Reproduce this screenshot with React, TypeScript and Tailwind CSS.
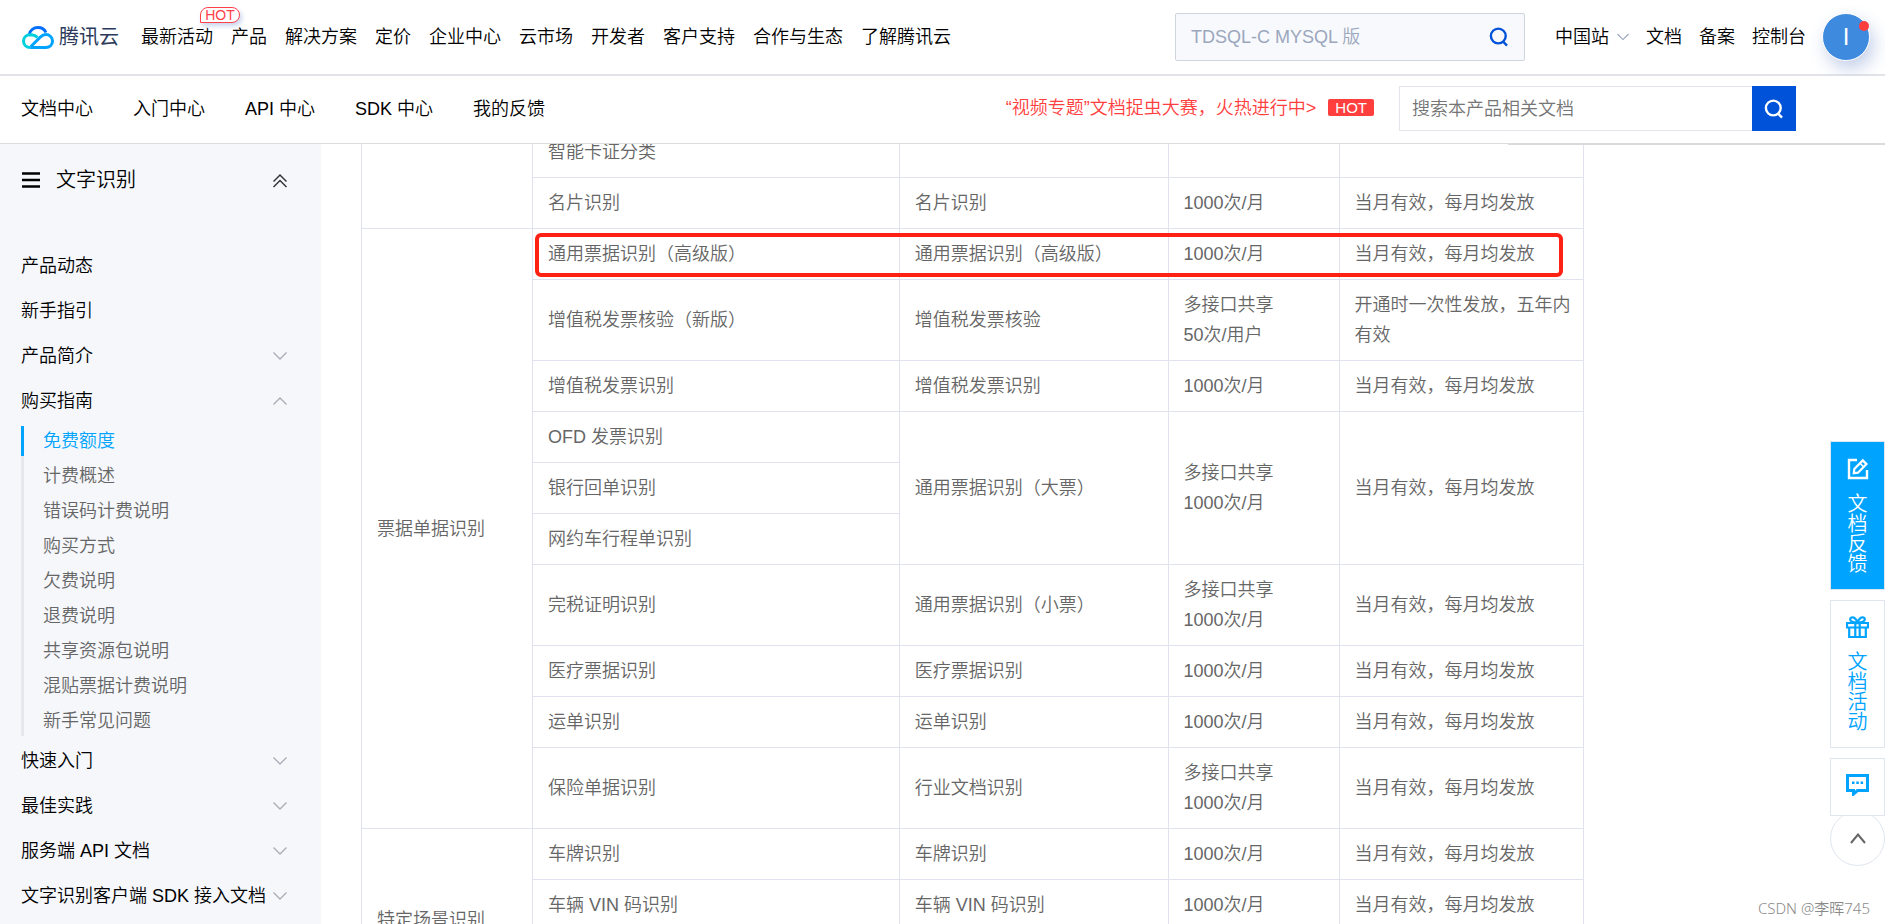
import { useState } from 'react';

const topNav = ['最新活动', '产品', '解决方案', '定价', '企业中心', '云市场', '开发者', '客户支持', '合作与生态', '了解腾讯云'];
const docNav = ['文档中心', '入门中心', 'API 中心', 'SDK 中心', '我的反馈'];

type MenuItem = { label: string; expandable?: boolean; children?: string[] };

const menu: MenuItem[] = [
  { label: '产品动态' },
  { label: '新手指引' },
  { label: '产品简介', expandable: true },
  {
    label: '购买指南',
    expandable: true,
    children: [
      '免费额度',
      '计费概述',
      '错误码计费说明',
      '购买方式',
      '欠费说明',
      '退费说明',
      '共享资源包说明',
      '混贴票据计费说明',
      '新手常见问题',
    ],
  },
  { label: '快速入门', expandable: true },
  { label: '最佳实践', expandable: true },
  { label: '服务端 API 文档', expandable: true },
  { label: '文字识别客户端 SDK 接入文档', expandable: true },
];

type Cell = { text: string; rowSpan?: number };

const monthly = '当月有效，每月均发放';
const shared = '多接口共享\n1000次/月';

const row = (...texts: string[]): Cell[] => texts.map((text) => ({ text }));

const rows: Cell[][] = [
  [{ text: '', rowSpan: 2 }, ...row('智能卡证分类', '', '', '')],
  row('名片识别', '名片识别', '1000次/月', monthly),
  [{ text: '票据单据识别', rowSpan: 10 }, ...row('通用票据识别（高级版）', '通用票据识别（高级版）', '1000次/月', monthly)],
  row('增值税发票核验（新版）', '增值税发票核验', '多接口共享\n50次/用户', '开通时一次性发放，五年内有效'),
  row('增值税发票识别', '增值税发票识别', '1000次/月', monthly),
  [
    { text: 'OFD 发票识别' },
    { text: '通用票据识别（大票）', rowSpan: 3 },
    { text: shared, rowSpan: 3 },
    { text: monthly, rowSpan: 3 },
  ],
  row('银行回单识别'),
  row('网约车行程单识别'),
  row('完税证明识别', '通用票据识别（小票）', shared, monthly),
  row('医疗票据识别', '医疗票据识别', '1000次/月', monthly),
  row('运单识别', '运单识别', '1000次/月', monthly),
  row('保险单据识别', '行业文档识别', shared, monthly),
  [{ text: '特定场景识别', rowSpan: 3 }, ...row('车牌识别', '车牌识别', '1000次/月', monthly)],
  row('车辆 VIN 码识别', '车辆 VIN 码识别', '1000次/月', monthly),
  row('', '', shared, monthly),
];

const Chevron = ({ up = false, className = '' }: { up?: boolean; className?: string }) => (
  <svg className={className} width="14" height="8" viewBox="0 0 14 8" fill="none" stroke="currentColor" strokeWidth="1.3">
    <path d={up ? 'M.5 7.5 7 1l6.5 6.5' : 'M.5.5 7 7 13.5.5'} />
  </svg>
);

const SearchIcon = () => (
  <svg width="20" height="20" viewBox="0 0 20 20" fill="none" stroke="currentColor" strokeWidth="2.4">
    <circle cx="9.3" cy="9" r="7.4" />
    <path d="m13.5 14 4.5 4.6" />
  </svg>
);

const Logo = () => (
  <a href="#" className="flex items-center gap-[5px]">
    <svg width="32" height="23" viewBox="0 0 32 23" fill="none" strokeWidth="3">
      <path d="M7.4 8.2C8.2 4.3 11.7 1.5 15.9 1.5c3.7 0 6.7 2 8 5" stroke="#006eff" />
      <path d="M15.5 11.5C13.5 9.6 11 8.8 8.3 8.8 4.4 8.9 1.5 11.6 1.5 15.2c0 3.6 2.9 6.3 6.7 6.3" stroke="#00d0dc" />
      <path d="M8.2 21.5h15.7c3.7 0 6.6-2.7 6.6-6.4s-2.9-6.5-6.6-6.5c-2 0-3.8.8-5.2 2.2L8.9 20.5" stroke="#00a3ff" />
    </svg>
    <span className="text-xl font-normal text-[#2b3a5a]">腾讯云</span>
  </a>
);

const Header = () => (
  <header className="flex h-[76px] items-center border-b-2 border-[#e1e3e8] pr-[15px] pl-[22px] whitespace-nowrap text-black">
    <Logo />
    <nav className="ml-[22px] flex gap-[18px]">
      {topNav.map((item) => (
        <a key={item} href="#" className="relative">
          {item}
          {item === '最新活动' && (
            <span className="absolute -top-4 left-[59px] h-4 w-10 rounded-lg rounded-bl-none border border-[#ff4048] bg-white text-center text-sm leading-[14px] text-[#ff4048] shadow-[2px_3px_5px_#c9d4ee]">
              HOT
            </span>
          )}
        </a>
      ))}
    </nav>

    <div className="ml-auto flex h-12 w-[350px] items-center rounded-xs border border-[#cfd5de] bg-[#f8f9fc] px-[15px]">
      <input aria-label="搜索" placeholder="TDSQL-C MYSQL 版" className="min-w-0 flex-1 outline-none placeholder:text-[#9ba7bd]" />
      <button type="button" aria-label="搜索" className="text-[#0052d9]">
        <SearchIcon />
      </button>
    </div>

    <div className="ml-[30px] flex items-center gap-[17px]">
      <a href="#" className="flex items-center gap-2">
        中国站
        <Chevron className="w-3 text-[#97a3b7]" />
      </a>
      <a href="#">文档</a>
      <a href="#">备案</a>
      <a href="#">控制台</a>
    </div>
    <button
      type="button"
      className="relative ml-4 size-12 rounded-full border border-white bg-[#3e8ade] text-2xl leading-none text-white shadow-[4px_8px_18px_#c3cfe8]"
    >
      I
      <span className="absolute top-[7px] right-0 size-[10px] rounded-full bg-[#ff3e3e]" />
    </button>
  </header>
);

const DocBar = () => (
  <div className="relative z-10 flex h-[68px] items-center border-b border-[#dcdcdc] bg-white pr-[89px] pb-[2px] pl-[21px] whitespace-nowrap text-black">
    <nav className="flex gap-10">
      {docNav.map((item) => (
        <a key={item} href="#">
          {item}
        </a>
      ))}
    </nav>
    <a href="#" className="ml-auto flex items-center gap-3 pb-[2px] text-[#ff3e3e]">
      “视频专题”文档捉虫大赛，火热进行中&gt;
      <span className="rounded-xs bg-[#ff3e3e] px-[7px] text-[15px] leading-[17px] text-white">HOT</span>
    </a>
    <div className="ml-[25px] flex h-[45px] w-[397px]">
      <input
        aria-label="搜索本产品相关文档"
        placeholder="搜索本产品相关文档"
        className="min-w-0 flex-1 border border-r-0 border-[#e3e5ea] px-3 outline-none placeholder:text-[#757575]"
      />
      <button type="button" aria-label="搜索文档" className="flex w-11 items-center justify-center bg-[#0052d9] text-white">
        <SearchIcon />
      </button>
    </div>
    {/* 右侧目录的上边线 */}
    <div className="absolute right-0 -bottom-[2px] h-[2px] w-1/5 bg-[#dadada]" />
  </div>
);

const Sidebar = () => {
  const [active, setActive] = useState('免费额度');

  return (
    <aside className="w-[321px] shrink-0 bg-[#f5f7fb] text-black">
      <div className="flex h-[72px] items-center pr-[34px] pl-[22px]">
        <svg width="18" height="16" viewBox="0 0 18 16" stroke="currentColor" strokeWidth="2.4">
          <path d="M0 1.5h18M0 8h18M0 14.5h18" />
        </svg>
        <h2 className="ml-4 text-xl">文字识别</h2>
        <svg className="ml-auto text-[#333]" width="14" height="16" viewBox="0 0 14 16" fill="none" stroke="currentColor" strokeWidth="1.5">
          <path d="M.5 9.5 7 3l6.5 6.5M.5 15 7 8.5l6.5 6.5" />
        </svg>
      </div>

      <ul className="mt-[27px] pr-[34px] pl-[21px] whitespace-nowrap">
        {menu.map((item) => (
          <li key={item.label}>
            <a href="#" className="flex h-[45px] items-center justify-between">
              {item.label}
              {item.expandable && <Chevron up={!!item.children} className="shrink-0 text-[#a8acb5]" />}
            </a>
            {item.children && (
              <ul className="mt-[3px] mb-[2px] flex flex-col gap-[5px] bg-[linear-gradient(#e6e8ed,#e6e8ed)] bg-[length:3px_100%] bg-no-repeat">
                {item.children.map((child) => (
                  <li key={child}>
                    <a
                      href="#"
                      onClick={() => setActive(child)}
                      className={`flex h-[30px] items-center border-l-[3px] pl-[19px] ${
                        child === active ? 'border-[#00a4ff] text-[#00a4ff]' : 'border-[#e6e8ed] text-[#666]'
                      }`}
                    >
                      {child}
                    </a>
                  </li>
                ))}
              </ul>
            )}
          </li>
        ))}
      </ul>
    </aside>
  );
};

const QuotaTable = () => (
  <div className="relative -mt-[18px]">
    <table className="w-full table-fixed border-collapse text-[#666]">
      <colgroup>
        <col className="w-[14%]" />
        <col className="w-[30%]" />
        <col className="w-[22%]" />
        <col className="w-[14%]" />
        <col className="w-[20%]" />
      </colgroup>
      <tbody>
        {rows.map((cells, i) => (
          <tr key={i} className="h-[51px]">
            {cells.map((cell, j) => (
              <td
                key={j}
                rowSpan={cell.rowSpan}
                className="border border-[#e0e3ef] py-[10px] pr-2 pl-[15px] align-middle leading-[30px] whitespace-pre-line"
              >
                {cell.text}
              </td>
            ))}
          </tr>
        ))}
      </tbody>
    </table>
    {/* 高亮「通用票据识别（高级版）」一行 */}
    <div className="pointer-events-none absolute top-[107px] right-[21px] left-[174px] h-11 rounded-md border-4 border-[#ff2214]" />
  </div>
);

const FloatBar = () => (
  <div className="absolute right-0 bottom-[58px] flex w-[55px] flex-col text-xl leading-5">
    <button type="button" className="flex h-[149px] flex-col items-center gap-[14px] border border-[#e0e6ef] bg-[#00a4ff] pt-4 text-white">
      <svg width="22" height="22" viewBox="0 0 22 22" fill="none" stroke="currentColor" strokeWidth="2.4">
        <path d="M10 2H2v18h18v-8" />
        <path d="m6.8 15.2.5-4.3 8.5-8.5 3.7 3.7-8.5 8.6z" strokeWidth="2.2" />
        <path d="m13 5.2 3.6 3.6" strokeWidth="1.6" />
      </svg>
      <span className="w-5">文档反馈</span>
    </button>
    <button type="button" className="mt-[10px] flex h-[148px] flex-col items-center gap-[14px] border border-[#e0e6ef] bg-white pt-[15px] text-[#00a4ff]">
      <svg width="23" height="22" viewBox="0 0 23 22" fill="none" stroke="currentColor" strokeWidth="2.2">
        <path d="M1 7h21v4.5H1zM3.2 11.5V21h16.6v-9.500M9.3 7v14M13.7 7v14" />
        <path d="M11.5 7C8.5 6.5 4.5 6 4.2 3.6 4 1.6 6.5.8 8.2 1.8 10 2.9 11 5 11.5 7zM11.5 7c3-.5 7-1 7.3-3.4.2-2-2.3-2.8-4-1.8-1.8 1.1-2.8 3.2-3.3 5.2z" />
      </svg>
      <span className="w-5">文档活动</span>
    </button>
    <button type="button" aria-label="在线咨询" className="z-10 mt-[10px] flex h-[58px] items-center justify-center border border-[#e0e6ef] bg-white pb-1 text-[#00a4ff]">
      <svg width="23" height="22" viewBox="0 0 23 22" fill="none">
        <path d="M1.5 1.5h20v15H11.5l-4 3.5v-3.5h-6z" stroke="currentColor" strokeWidth="3" />
        <path d="M6 7.5h2.5V10H6zM10.3 7.5h2.5V10h-2.5zM14.6 7.5h2.5V10h-2.5z" fill="currentColor" />
      </svg>
    </button>
    <button type="button" aria-label="回到顶部" className="-mt-[5px] flex h-[55px] items-center justify-center rounded-full border border-[#e0e6ef] bg-white text-[#666]">
      <svg width="16" height="11" viewBox="0 0 16 11" fill="none" stroke="currentColor" strokeWidth="2">
        <path d="m1 10 7-8.5L15 10" />
      </svg>
    </button>
  </div>
);

export default function App() {
  return (
    <div className="relative flex h-screen flex-col overflow-hidden bg-white font-['Liberation_Sans','Noto_Sans_CJK_SC',sans-serif] text-lg font-[350]">
      <Header />
      <DocBar />
      <div className="flex min-h-0 flex-1">
        <Sidebar />
        <main className="min-w-0 flex-1 overflow-hidden pr-[301px] pl-10">
          <QuotaTable />
        </main>
      </div>
      <FloatBar />
      <p className="absolute right-[15px] bottom-1 font-['Noto_Sans','Noto_Sans_CJK_SC',sans-serif] text-[15px] text-[#8a8a8a]">CSDN @李晖745</p>
    </div>
  );
}
